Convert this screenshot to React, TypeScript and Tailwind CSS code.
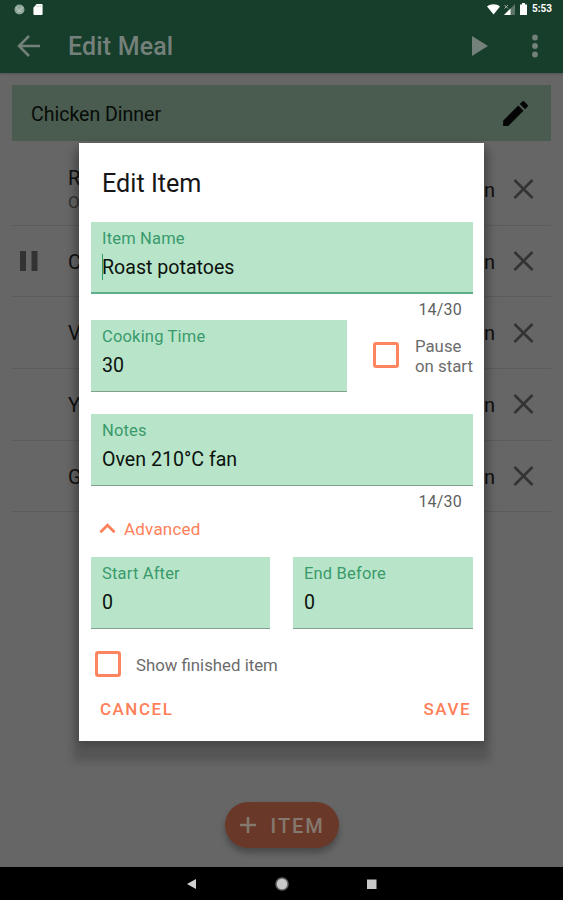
import React from "react";

const items = [
  { name: "R", note: "O", time: "n" },
  { name: "C", time: "n", paused: true },
  { name: "V", time: "n" },
  { name: "Y", time: "n" },
  { name: "G", time: "n" },
];

const StatusBar: React.FC = () => (
  <div className="h-[18px] flex items-center justify-between pl-[14px] pr-[11px]">
    <div className="flex items-center gap-[8px]">
      <svg width="11" height="11" viewBox="0 0 11 11">
        <circle cx="5.5" cy="5.5" r="5" fill="#8fa69a" />
        <path d="M2 3l3 4 4-4M3 8l5-1" stroke="#b2c1b9" strokeWidth="1.2" fill="none" />
      </svg>
      <svg width="10" height="11" viewBox="0 0 10 12">
        <path d="M3.5 0H9a1 1 0 0 1 1 1v10a1 1 0 0 1-1 1H1a1 1 0 0 1-1-1V4z" fill="#fff" />
        <path d="M4 1.5v2M6 1.5v2M8 1.5v2" stroke="#b5c2bb" strokeWidth=".8" />
      </svg>
    </div>
    <div className="flex items-center">
      <svg width="13" height="11" viewBox="0 0 13 11">
        <path d="M0 2.5C3.5-.5 9.5-.5 13 2.5L6.5 10.5z" fill="#fff" />
      </svg>
      <svg className="ml-[4px]" width="11" height="11" viewBox="0 0 11 11">
        <path d="M11 0v11H0z" fill="#5c7568" />
        <path d="M6.5 4.5V11H0z" fill="#fff" />
        <path d="M.5 1l3.5 3.5M4 1L.5 4.5" stroke="#9fb0a7" strokeWidth="1" />
      </svg>
      <svg className="ml-[5px]" width="7" height="12" viewBox="0 0 7 12">
        <path d="M2 0h3v1.5h2V12H0V1.5h2z" fill="#fff" />
      </svg>
      <span className="ml-[5px] text-[10px] leading-none font-bold text-white">5:53</span>
    </div>
  </div>
);

type FieldProps = {
  label: string;
  value: string;
  className?: string;
  focused?: boolean;
};

const Field: React.FC<FieldProps> = ({ label, value, className = "", focused }) => (
  <div
    className={`h-[72px] shrink-0 bg-[#b8e5c9] pl-[11px] pt-[7px] ${
      focused ? "border-b-2 border-[#5eae8c]" : "border-b border-[#82a08e]"
    } ${className}`}
  >
    <div className="text-[16.5px] leading-[20px] tracking-[0.18px] text-[#3a9a6c]">{label}</div>
    <div className="relative mt-[7px] text-[19.6px] leading-[24px] text-[#0c120e]">
      {focused && <span className="absolute left-0 -top-[2px] h-[26px] w-px bg-[#3a9a6c]" />}
      {value}
    </div>
  </div>
);

const Counter: React.FC = () => (
  <div className="h-[26px] pr-[11px] pt-[6px] text-right text-[16px] leading-[20px] tracking-[0.2px] text-[#5f5f5f]">
    14/30
  </div>
);

const Checkbox: React.FC = () => (
  <span className="block size-[26px] shrink-0 rounded-[3px] border-3 border-[#ff8560]" />
);

const EditItemDialog: React.FC = () => (
  <div className="absolute left-[79px] top-[143px] w-[405px] h-[598px] bg-white pl-3 pr-[11px] shadow-[0_14px_8px_6px_rgba(0,0,0,0.17),0_2px_8px_1px_rgba(0,0,0,0.2)]">
    <h2 className="h-[79px] pl-[11px] pt-[25px] text-[25.2px] leading-[32px] text-[#161616]">
      Edit Item
    </h2>
    <Field label="Item Name" value="Roast potatoes" focused />
    <Counter />
    <div className="flex">
      <Field label="Cooking Time" value="30" className="w-[256px]" />
      <div className="flex h-[70px] items-center pl-[26px]">
        <Checkbox />
        <div className="ml-[16px] mt-[2px] whitespace-nowrap text-[16.8px] leading-[20px] text-[#6c6c6c]">
          Pause
          <br />
          on start
        </div>
      </div>
    </div>
    <Field label="Notes" value="Oven 210°C fan" className="mt-[22px]" />
    <Counter />
    <div className="flex h-[45px] items-start pl-[8px] pt-[7px] text-[#ff7f5a]">
      <svg className="mt-[4px]" width="17" height="11" viewBox="0 0 18 11">
        <path d="M1.5 9.5L9 2l7.5 7.5" fill="none" stroke="currentColor" strokeWidth="2.8" />
      </svg>
      <span className="ml-[8px] text-[17px] leading-[20px] tracking-[0.2px]">Advanced</span>
    </div>
    <div className="flex justify-between">
      <Field label="Start After" value="0" className="w-[179px]" />
      <Field label="End Before" value="0" className="w-[180px]" />
    </div>
    <div className="mt-[22px] flex items-center pl-[4px]">
      <Checkbox />
      <span className="ml-[15px] mt-[1px] text-[16.8px] leading-[20px] text-[#6c6c6c]">
        Show finished item
      </span>
    </div>
    <div className="mt-[22px] flex justify-between pl-[9px] pr-[2px] text-[17px] leading-[20px] font-medium tracking-[1.5px] text-[#ff7f5a]">
      <button>CANCEL</button>
      <button>SAVE</button>
    </div>
  </div>
);

const App: React.FC = () => {
  return (
    <div className="relative flex h-[900px] w-[563px] flex-col overflow-hidden bg-[#666666] font-['Roboto',sans-serif]">
      <header className="h-[73px] shrink-0 bg-[#173d2b] shadow-[0_1px_2px_rgba(0,0,0,0.2)]">
        <StatusBar />
        <div className="flex h-[55px] items-center pl-[17px] pr-[25px] text-[#74807a]">
          <svg width="23" height="22" viewBox="0 0 23 22" fill="none" stroke="currentColor" strokeWidth="2.5">
            <path d="M23 11H2M12 1L2 11l10 10" />
          </svg>
          <h1 className="ml-[28px] mt-[2px] text-[25px] leading-[32px] font-medium tracking-[0.15px]">Edit Meal</h1>
          <svg className="ml-auto" width="16" height="20" viewBox="0 0 16 20">
            <path d="M0 0l16 10L0 20z" fill="currentColor" />
          </svg>
          <svg className="ml-[44px]" width="6" height="24" viewBox="0 0 6 24" fill="currentColor">
            <circle cx="3" cy="3.5" r="2.9" />
            <circle cx="3" cy="12" r="2.9" />
            <circle cx="3" cy="20.5" r="2.9" />
          </svg>
        </div>
      </header>

      <main className="flex-1 px-3 pt-3">
        <div className="flex h-[56px] items-center justify-between bg-[#4a5c50] pl-[19px] pr-[20px]">
          <span className="mt-[3px] text-[19.5px] text-[#070b08]">Chicken Dinner</span>
          <svg className="mr-[-1px]" width="33" height="33" viewBox="0 0 24 24" fill="#050505">
            <path d="M3 17.25V21h3.75L17.81 9.94l-3.75-3.75L3 17.25zM20.71 7.04a1 1 0 0 0 0-1.41l-2.34-2.34a1 1 0 0 0-1.41 0l-1.83 1.83 3.75 3.75 1.83-1.83z" />
          </svg>
        </div>
        <div className="mt-[13px]">
          {items.map((item) => (
            <div
              key={item.name}
              className="flex h-[71.7px] items-center border-b border-[#5c5c5c] pl-[8px] pr-[17px] text-[20px] text-[#101010]"
            >
              <div className="w-[48px]">
                {item.paused && (
                  <svg width="18" height="20" viewBox="0 0 18 20" fill="#333333">
                    <path d="M0 0h6v20H0zM11.5 0h6v20h-6z" />
                  </svg>
                )}
              </div>
              <div className="pt-[1px] leading-[24px]">
                {item.name}
                {item.note && <div className="text-[17px] text-[#333333]">{item.note}</div>}
              </div>
              <span className="ml-auto pt-[1px]">{item.time}</span>
              <svg className="ml-[18px]" width="21" height="20" viewBox="0 0 21 20">
                <path d="M1.5 1l18 18M19.5 1l-18 18" stroke="#333333" strokeWidth="2.6" />
              </svg>
            </div>
          ))}
        </div>
      </main>

      <div className="flex h-[65px] shrink-0 justify-center">
        <button className="flex h-[46px] w-[114px] items-center rounded-full bg-[#6a3828] pl-[14px] text-[#85786f] shadow-[0_5px_6px_rgba(0,0,0,0.28)]">
          <svg width="18" height="18" viewBox="0 0 18 18">
            <path d="M9 1v16M1 9h16" stroke="currentColor" strokeWidth="2.5" />
          </svg>
          <span className="ml-[14px] mt-[2px] text-[20px] font-medium tracking-[2px]">ITEM</span>
        </button>
      </div>

      <nav className="flex h-[33px] shrink-0 items-center justify-between bg-black px-[186px]">
        <svg width="10" height="10" viewBox="0 0 10 10">
          <path d="M10 0v10L1 5z" fill="#d0d0d0" />
        </svg>
        <svg width="14" height="14" viewBox="0 0 14 14">
          <circle cx="7" cy="7" r="6" fill="#c8c8c8" stroke="#666" strokeWidth="1.5" />
        </svg>
        <svg width="10" height="10" viewBox="0 0 10 10">
          <path d="M0 .5h9.5V10H0z" fill="#c8c8c8" />
        </svg>
      </nav>

      <EditItemDialog />
    </div>
  );
};

export default App;
